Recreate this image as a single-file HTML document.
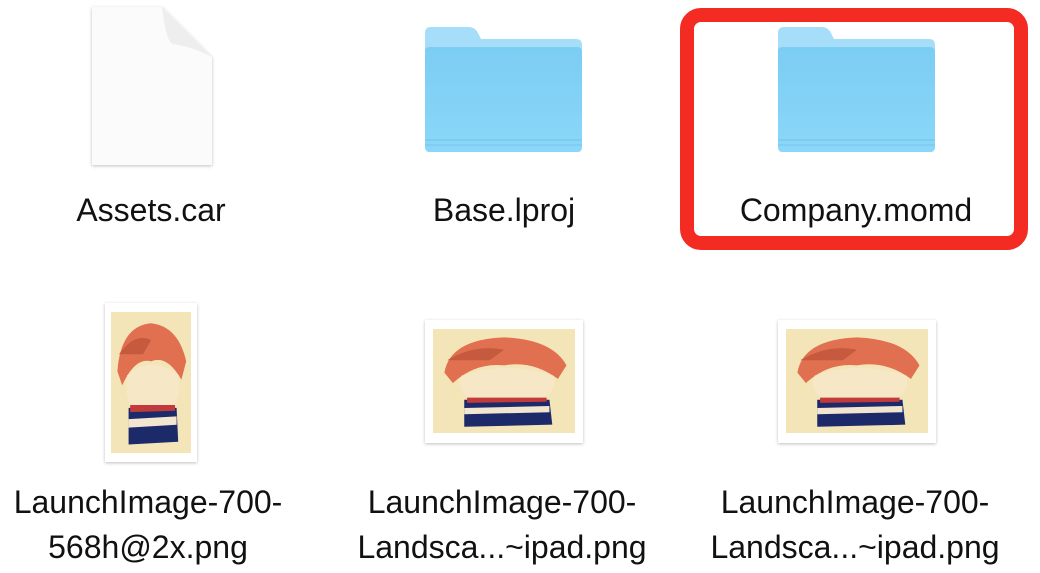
<!DOCTYPE html>
<html><head><style>
html,body{margin:0;padding:0;background:#fff;width:1040px;height:573px;overflow:hidden}
svg{position:absolute;left:0;top:0}
text{font-family:"Liberation Sans",sans-serif;font-size:32px;fill:#111;text-anchor:middle}
</style></head><body>
<svg width="1040" height="573" viewBox="0 0 1040 573">
<defs>
<linearGradient id="fb" x1="0" y1="0" x2="0" y2="1"><stop offset="0" stop-color="#7ccdf4"/><stop offset="1" stop-color="#8ad7f8"/></linearGradient>
<filter id="sh" x="-10%" y="-10%" width="120%" height="130%"><feDropShadow dx="0" dy="1" stdDeviation="1.5" flood-color="#000" flood-opacity="0.25"/></filter>
<g id="folder">
<path d="M0 6 Q0 0 6 0 L44 0 Q50 0 53 6 L56 12 L151 12 Q157 12 157 18 L157 120 Q157 125 152 125 L5 125 Q0 125 0 120 Z" fill="#a6def9"/>
<path d="M0 24 Q0 20 5 20 L152 20 Q157 20 157 25 L157 120 Q157 125 152 125 L5 125 Q0 125 0 120 Z" fill="url(#fb)"/>
<rect x="0" y="112" width="157" height="2" fill="#77c3ea" opacity=".6"/>
<rect x="0" y="117" width="157" height="2" fill="#77c3ea" opacity=".5"/>
</g>
<g id="kid">
<rect x="0" y="0" width="100" height="100" fill="#f4e5b8"/>
<path d="M8 42 Q12 10 50 8 Q84 10 94 35 L88 48 Q70 30 50 35 Q30 32 14 52 Z" fill="#e0704f"/>
<path d="M10 30 Q30 14 50 20 L40 30 Z" fill="#c55a3e"/>
<path d="M20 45 Q50 30 85 45 Q88 65 70 70 L30 70 Q16 62 20 45 Z" fill="#f6e8c6"/>
<path d="M22 68 L82 68 L84 92 L22 94 Z" fill="#1d2a6a"/>
<path d="M22 76 L82 74 L82 80 L22 82 Z" fill="#f3e6d0"/>
<path d="M24 66 L80 66 L80 70 L24 71 Z" fill="#c23a3a"/>
</g>
</defs>

<g filter="url(#sh)">
<path d="M92 7 L162 7 L212 57 L212 165 L92 165 Z" fill="#fbfbfb"/>
</g>
<path d="M162 7 Q166 40 172 44 Q190 46 212 57 Z" fill="#eeeeee"/>
<text x="151" y="221">Assets.car</text>

<use href="#folder" x="425" y="27"/>
<text x="504" y="221">Base.lproj</text>

<rect x="687" y="15" width="334" height="228" rx="14" fill="none" stroke="#f42b22" stroke-width="14"/>
<use href="#folder" x="778" y="27"/>
<text x="856" y="221">Company.momd</text>

<g filter="url(#sh)"><rect x="105" y="303" width="92" height="159" fill="#fff"/></g>
<svg x="111" y="312" width="80" height="141" viewBox="0 0 100 100" preserveAspectRatio="none"><use href="#kid"/></svg>

<g filter="url(#sh)"><rect x="425" y="320" width="158" height="123" fill="#fff"/></g>
<svg x="433" y="329" width="142" height="104" viewBox="0 0 100 100" preserveAspectRatio="none"><use href="#kid"/></svg>

<g filter="url(#sh)"><rect x="778" y="320" width="158" height="123" fill="#fff"/></g>
<svg x="786" y="329" width="142" height="104" viewBox="0 0 100 100" preserveAspectRatio="none"><use href="#kid"/></svg>

<text x="148" y="513">LaunchImage-700-</text>
<text x="148" y="558">568h@2x.png</text>
<text x="502" y="513">LaunchImage-700-</text>
<text x="502" y="558">Landsca...~ipad.png</text>
<text x="855" y="513">LaunchImage-700-</text>
<text x="855" y="558">Landsca...~ipad.png</text>
</svg>
</body></html>
